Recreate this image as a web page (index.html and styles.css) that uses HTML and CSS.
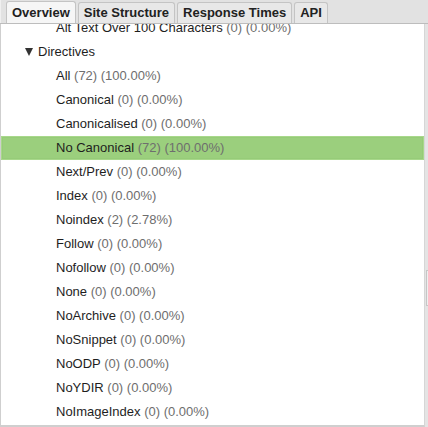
FILE: index.html
```html
<!DOCTYPE html>
<html>
<head>
<meta charset="utf-8">
<link rel="stylesheet" href="styles.css">
</head>
<body>
<div class="window">
  <div class="tabs">
    <div class="tab active">Overview</div>
    <div class="tab">Site Structure</div>
    <div class="tab">Response Times</div>
    <div class="tab">API</div>
  </div>
  <div class="body">
    <div class="panel">
      <div class="tree">
        <div class="row child clipped">Alt Text Over 100 Characters <span class="n">(0) (0.00%)</span></div>
        <div class="row group"><span class="tri"></span>Directives</div>
        <div class="row child">All <span class="n">(72) (100.00%)</span></div>
        <div class="row child">Canonical <span class="n">(0) (0.00%)</span></div>
        <div class="row child">Canonicalised <span class="n">(0) (0.00%)</span></div>
        <div class="row child selected">No Canonical <span class="n">(72) (100.00%)</span></div>
        <div class="row child">Next/Prev <span class="n">(0) (0.00%)</span></div>
        <div class="row child">Index <span class="n">(0) (0.00%)</span></div>
        <div class="row child">Noindex <span class="n">(2) (2.78%)</span></div>
        <div class="row child">Follow <span class="n">(0) (0.00%)</span></div>
        <div class="row child">Nofollow <span class="n">(0) (0.00%)</span></div>
        <div class="row child">None <span class="n">(0) (0.00%)</span></div>
        <div class="row child">NoArchive <span class="n">(0) (0.00%)</span></div>
        <div class="row child">NoSnippet <span class="n">(0) (0.00%)</span></div>
        <div class="row child">NoODP <span class="n">(0) (0.00%)</span></div>
        <div class="row child">NoYDIR <span class="n">(0) (0.00%)</span></div>
        <div class="row child">NoImageIndex <span class="n">(0) (0.00%)</span></div>
      </div>
    </div>
    <div class="scroll"><div class="thumb"></div></div>
  </div>
</div>
</body>
</html>
```
FILE: styles.css
```css
html, body {
  margin: 0;
  padding: 0;
  background: #e4e4e4;
}
.window {
  width: 428px;
  height: 427px;
  display: flex;
  flex-direction: column;
  font-family: "Liberation Sans", Arial, sans-serif;
  font-size: 13px;
  color: #1e1e1e;
  overflow: hidden;
}
.tabs {
  height: 23px;
  flex: none;
  display: flex;
  align-items: flex-end;
  gap: 2px;
  padding-left: 6px;
  background: #e2e2e2;
  border-bottom: 1px solid #bdbdbd;
  box-shadow: inset 1px 0 0 #f0f0f0;
}
.tab {
  height: 21px;
  box-sizing: border-box;
  padding: 0 5px;
  font-weight: bold;
  font-size: 13px;
  line-height: 20px;
  color: #222;
  background: #e8e8e8;
  border: 1px solid #c4c4c4;
  border-bottom: none;
  border-radius: 3px 3px 0 0;
  margin-bottom: 0;
}
.tab.active {
  background: #f6f6f6;
  height: 22px;
  line-height: 21px;
}
.body {
  flex: 1;
  display: flex;
  min-height: 0;
}
.panel {
  flex: 1;
  background: #fff;
  border-left: 1px solid #cfcfcf;
  border-bottom: 2px solid #cfcfcf;
  border-right: 1px solid #d6d6d6;
  overflow: hidden;
  position: relative;
}
.tree {
  margin-top: -8px;
}
.row {
  height: 24px;
  line-height: 24px;
  white-space: nowrap;
  box-sizing: border-box;
}
.child {
  padding-left: 55px;
}
.group {
  padding-left: 24px;
  display: flex;
  align-items: center;
}
.tri {
  width: 0;
  height: 0;
  border-left: 4.5px solid transparent;
  border-right: 4.5px solid transparent;
  border-top: 8px solid #333;
  margin-right: 5px;
}
.n {
  color: #6e6e6e;
}
.selected {
  background: #9bcf7d;
  border: 1px solid #a8d88b;
  box-shadow: inset 0 0 0 1px #96cb78;
  line-height: 22px;
  padding-left: 54px;
}
.scroll {
  width: 3px;
  flex: none;
  background: #e4e4e4;
  position: relative;
}
.thumb {
  position: absolute;
  left: 1px;
  top: 246px;
  width: 2px;
  height: 34px;
  border: 1px solid #c6c6c6;
  border-right: none;
  background: #efefef;
}
```
